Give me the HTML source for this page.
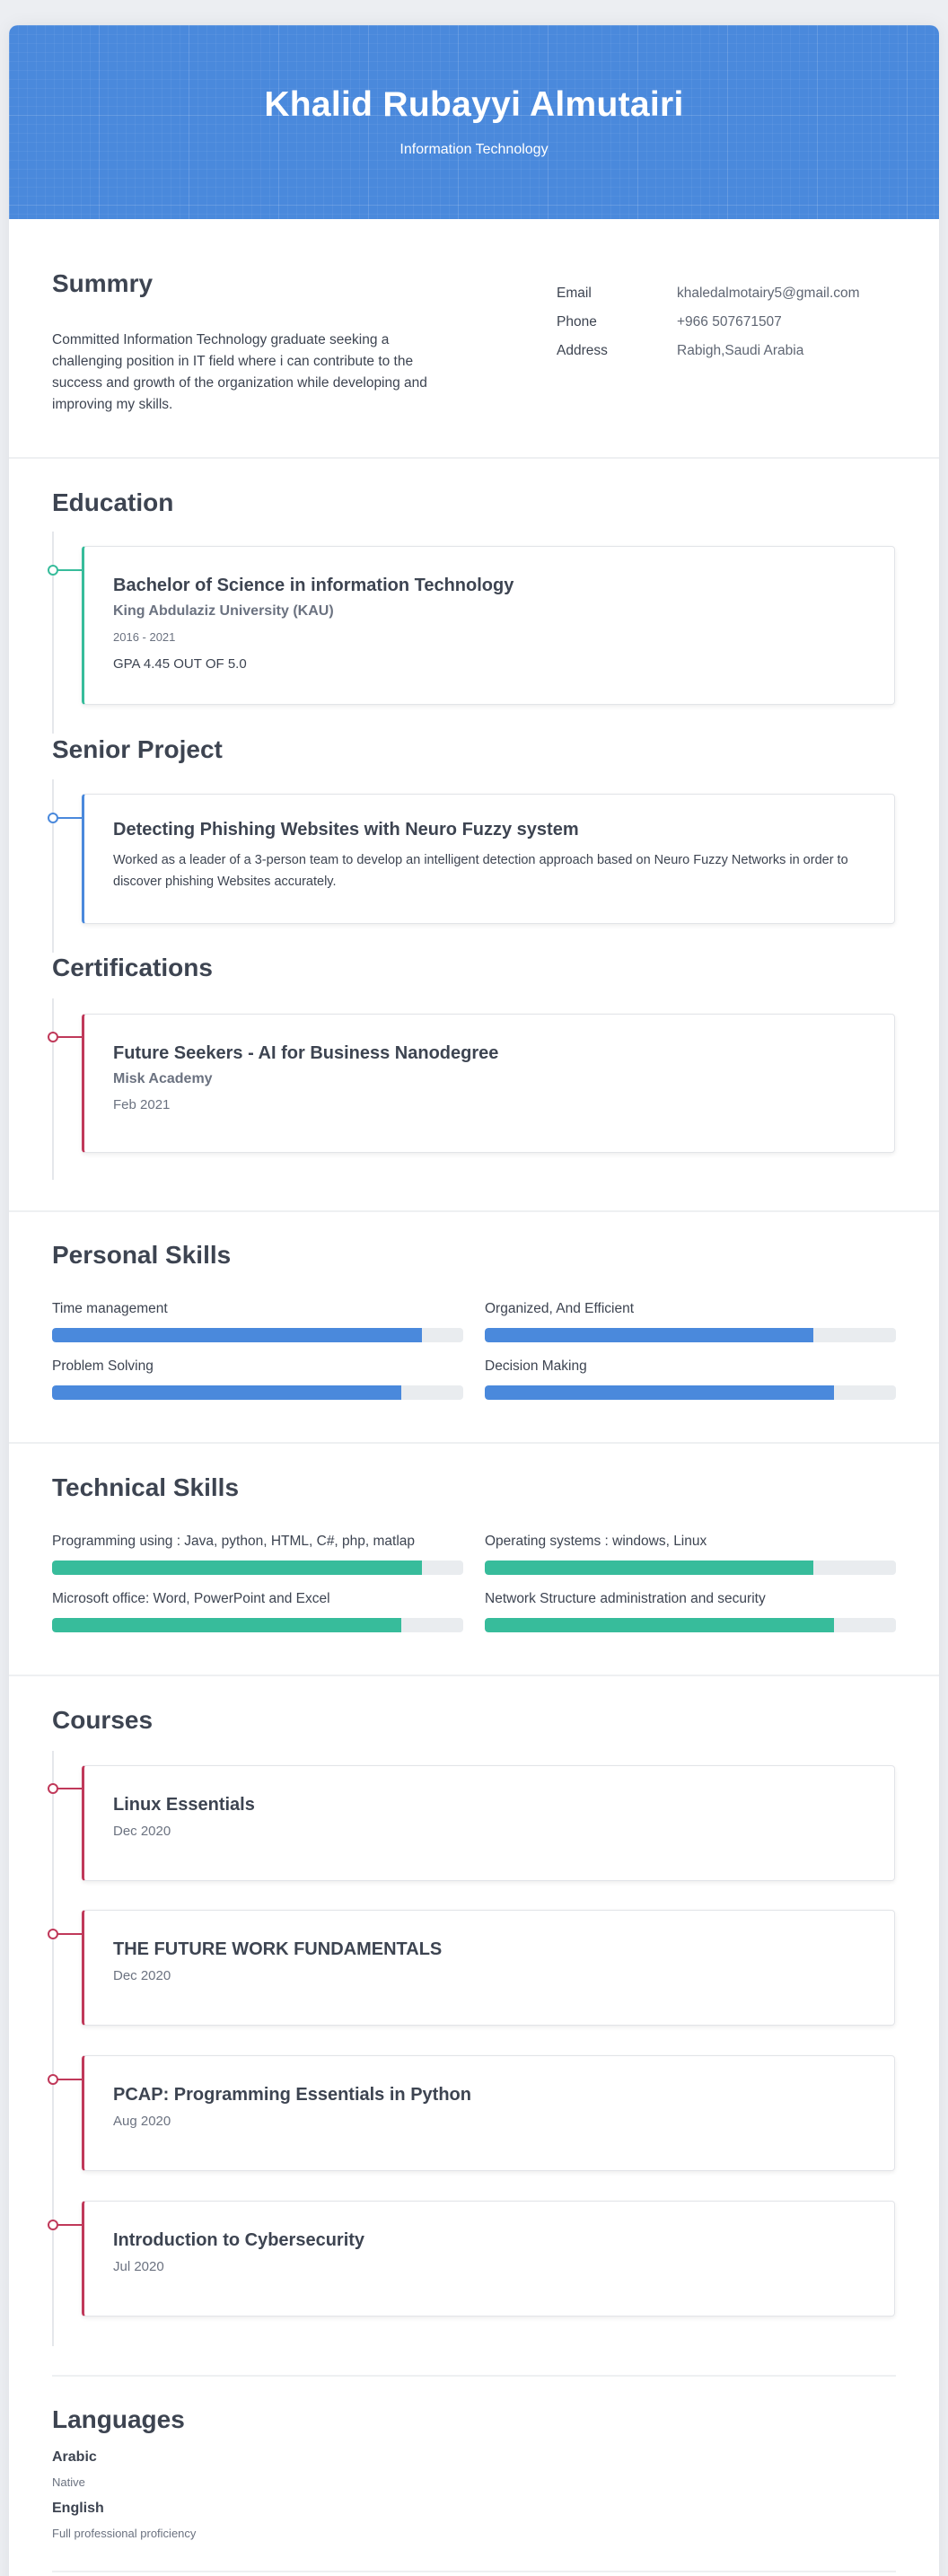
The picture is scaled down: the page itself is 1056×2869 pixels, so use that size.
<!DOCTYPE html>
<html><head><meta charset="utf-8">
<style>
*{margin:0;padding:0;box-sizing:border-box}
html,body{width:1056px;height:2869px;overflow:hidden}
body{background:#eceef2;font-family:"Liberation Sans",Arial,sans-serif;color:#3d4451;position:relative}
.card{position:absolute;left:10px;top:28px;width:1036px;height:2900px;background:#fff;border-radius:10px 10px 0 0;box-shadow:0 0 20px rgba(0,0,0,.06);overflow:hidden}
.hdr{position:absolute;left:0;top:0;width:1036px;height:216px;background-color:#4a89dc;
background-image:linear-gradient(rgba(255,255,255,.10) 1px,transparent 1px),linear-gradient(90deg,rgba(255,255,255,.10) 1px,transparent 1px),linear-gradient(rgba(255,255,255,.05) 1px,transparent 1px),linear-gradient(90deg,rgba(255,255,255,.05) 1px,transparent 1px);
background-size:100px 100px,100px 100px,10px 10px,10px 10px}
.a{position:absolute;white-space:nowrap}
.name{left:0;width:1036px;text-align:center;top:67px;font-size:39px;font-weight:bold;color:#fff;letter-spacing:0.3px}
.sub{left:0;width:1036px;text-align:center;top:130px;font-size:16px;color:#fff}
h2{position:absolute;font-size:28px;font-weight:bold;color:#3d4451;white-space:nowrap;line-height:1}
.div{position:absolute;left:0;width:1036px;height:2px;background:#eef0f2}
.sm{font-size:15.5px;color:#3d4451}
.g{color:#5f6673}
.vline{position:absolute;left:48px;width:2px;background:#e5e7eb}
.dot{position:absolute;left:43px;width:12px;height:12px;border-radius:50%;background:#fff;border:2px solid}
.con{position:absolute;left:54px;width:28px;height:2px}
.ic{position:absolute;left:81px;width:906px;background:#fff;border:1px solid #e2e4e8;border-left:3px solid;border-radius:4px;box-shadow:0 2px 5px rgba(0,0,0,.07)}
.t{position:absolute;left:32px;font-size:20px;font-weight:bold;color:#3d4451;white-space:nowrap}
.s{position:absolute;left:32px;font-size:16px;font-weight:bold;color:#6b7280;white-space:nowrap}
.d{position:absolute;left:32px;font-size:15px;color:#6b7280;white-space:nowrap}
.bar{position:absolute;height:16px;width:458px;background:#e9ecef;border-radius:4px;overflow:hidden}
.bar i{display:block;height:100%;border-radius:4px 0 0 4px}
.lbl{position:absolute;font-size:15.5px;color:#3d4451;white-space:nowrap}
</style></head><body>
<div class="card">
<div class="hdr">
<div class="a name">Khalid Rubayyi Almutairi</div>
<div class="a sub">Information Technology</div>
</div>

<h2 style="left:48px;top:274px">Summry</h2>
<div class="a sm" style="left:48px;top:339px;line-height:24px;white-space:normal;width:450px;font-size:15.5px">Committed Information Technology graduate seeking a challenging position in IT field where i can contribute to the success and growth of the organization while developing and improving my skills.</div>
<div class="a sm" style="left:610px;top:290px">Email</div>
<div class="a sm g" style="left:744px;top:290px">khaledalmotairy5@gmail.com</div>
<div class="a sm" style="left:610px;top:322px">Phone</div>
<div class="a sm g" style="left:744px;top:322px">+966 507671507</div>
<div class="a sm" style="left:610px;top:354px">Address</div>
<div class="a sm g" style="left:744px;top:354px">Rabigh,Saudi Arabia</div>
<div class="div" style="top:481px"></div>

<h2 style="left:48px;top:518px">Education</h2>
<div class="vline" style="top:564px;height:225px"></div>
<div class="con" style="top:606px;background:#37bc9b"></div>
<div class="dot" style="top:601px;border-color:#37bc9b"></div>
<div class="ic" style="top:580px;height:177px;border-left-color:#37bc9b">
<div class="t" style="top:32px">Bachelor of Science in information Technology</div>
<div class="s" style="top:63px">King Abdulaziz University (KAU)</div>
<div class="d" style="top:93px;font-size:13px">2016 - 2021</div>
<div class="d" style="top:122px;color:#3d4451">GPA 4.45 OUT OF 5.0</div>
</div>

<h2 style="left:48px;top:793px">Senior Project</h2>
<div class="vline" style="top:840px;height:193px"></div>
<div class="con" style="top:882px;background:#4a89dc"></div>
<div class="dot" style="top:877px;border-color:#4a89dc"></div>
<div class="ic" style="top:856px;height:145px;border-left-color:#4a89dc">
<div class="t" style="top:28px">Detecting Phishing Websites with Neuro Fuzzy system</div>
<div class="d" style="top:61px;color:#3d4451;white-space:normal;width:860px;line-height:24px;font-size:14.5px">Worked as a leader of a 3-person team to develop an intelligent detection approach based on Neuro Fuzzy Networks in order to discover phishing Websites accurately.</div>
</div>

<h2 style="left:48px;top:1036px">Certifications</h2>
<div class="vline" style="top:1084px;height:202px"></div>
<div class="con" style="top:1126px;background:#c0395a"></div>
<div class="dot" style="top:1121px;border-color:#c0395a"></div>
<div class="ic" style="top:1101px;height:155px;border-left-color:#c0395a">
<div class="t" style="top:32px">Future Seekers - AI for Business Nanodegree</div>
<div class="s" style="top:63px">Misk Academy</div>
<div class="d" style="top:92px">Feb 2021</div>
</div>
<div class="div" style="top:1320px"></div>

<h2 style="left:48px;top:1356px">Personal Skills</h2>
<div class="lbl" style="left:48px;top:1421px">Time management</div>
<div class="lbl" style="left:530px;top:1421px">Organized, And Efficient</div>
<div class="bar" style="left:48px;top:1451px"><i style="width:90%;background:#4a89dc"></i></div>
<div class="bar" style="left:530px;top:1451px"><i style="width:80%;background:#4a89dc"></i></div>
<div class="lbl" style="left:48px;top:1485px">Problem Solving</div>
<div class="lbl" style="left:530px;top:1485px">Decision Making</div>
<div class="bar" style="left:48px;top:1515px"><i style="width:85%;background:#4a89dc"></i></div>
<div class="bar" style="left:530px;top:1515px"><i style="width:85%;background:#4a89dc"></i></div>
<div class="div" style="top:1578px"></div>

<h2 style="left:48px;top:1615px">Technical Skills</h2>
<div class="lbl" style="left:48px;top:1680px">Programming using : Java, python, HTML, C#, php, matlap</div>
<div class="lbl" style="left:530px;top:1680px">Operating systems : windows, Linux</div>
<div class="bar" style="left:48px;top:1710px"><i style="width:90%;background:#37bc9b"></i></div>
<div class="bar" style="left:530px;top:1710px"><i style="width:80%;background:#37bc9b"></i></div>
<div class="lbl" style="left:48px;top:1744px">Microsoft office: Word, PowerPoint and Excel</div>
<div class="lbl" style="left:530px;top:1744px">Network Structure administration and security</div>
<div class="bar" style="left:48px;top:1774px"><i style="width:85%;background:#37bc9b"></i></div>
<div class="bar" style="left:530px;top:1774px"><i style="width:85%;background:#37bc9b"></i></div>
<div class="div" style="top:1837px"></div>

<h2 style="left:48px;top:1874px">Courses</h2>
<div class="vline" style="top:1922px;height:663px"></div>

<div class="con" style="top:1963px;background:#c0395a"></div>
<div class="dot" style="top:1958px;border-color:#c0395a"></div>
<div class="ic" style="top:1938px;height:129px;border-left-color:#c0395a">
<div class="t" style="top:32px">Linux Essentials</div>
<div class="d" style="top:64px">Dec 2020</div>
</div>
<div class="con" style="top:2125px;background:#c0395a"></div>
<div class="dot" style="top:2120px;border-color:#c0395a"></div>
<div class="ic" style="top:2099px;height:129px;border-left-color:#c0395a">
<div class="t" style="top:32px">THE FUTURE WORK FUNDAMENTALS</div>
<div class="d" style="top:64px">Dec 2020</div>
</div>
<div class="con" style="top:2287px;background:#c0395a"></div>
<div class="dot" style="top:2282px;border-color:#c0395a"></div>
<div class="ic" style="top:2261px;height:129px;border-left-color:#c0395a">
<div class="t" style="top:32px">PCAP: Programming Essentials in Python</div>
<div class="d" style="top:64px">Aug 2020</div>
</div>
<div class="con" style="top:2449px;background:#c0395a"></div>
<div class="dot" style="top:2444px;border-color:#c0395a"></div>
<div class="ic" style="top:2423px;height:129px;border-left-color:#c0395a">
<div class="t" style="top:32px">Introduction to Cybersecurity</div>
<div class="d" style="top:64px">Jul 2020</div>
</div>

<div class="div" style="top:2617px;left:48px;width:940px"></div>
<h2 style="left:48px;top:2653px">Languages</h2>
<div class="a" style="left:48px;top:2700px;font-size:16px;font-weight:bold;color:#3d4451">Arabic</div>
<div class="a" style="left:48px;top:2729px;font-size:13px;color:#6b7280">Native</div>
<div class="a" style="left:48px;top:2757px;font-size:16px;font-weight:bold;color:#3d4451">English</div>
<div class="a" style="left:48px;top:2786px;font-size:13px;color:#6b7280">Full professional proficiency</div>
<div class="div" style="top:2835px;left:48px;width:940px"></div>
</div>
</body></html>
